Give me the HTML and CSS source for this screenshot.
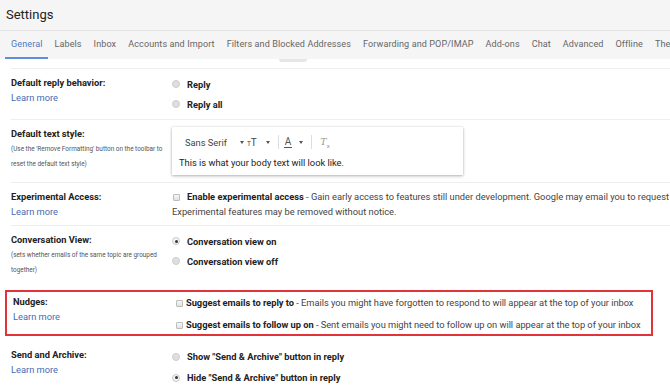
FILE: index.html
```html
<!DOCTYPE html>
<html>
<head>
<meta charset="utf-8">
<link rel="stylesheet" href="styles.css">
</head>
<body>
<header class="header"><h1 class="title">Settings</h1></header>
<nav class="tabs">
  <span class="tab active">General</span>
  <span class="tab">Labels</span>
  <span class="tab">Inbox</span>
  <span class="tab">Accounts and Import</span>
  <span class="tab">Filters and Blocked Addresses</span>
  <span class="tab">Forwarding and POP/IMAP</span>
  <span class="tab">Add-ons</span>
  <span class="tab">Chat</span>
  <span class="tab">Advanced</span>
  <span class="tab">Offline</span>
  <span class="tab">Themes</span>
</nav>
<div class="notchbar"><span class="notch"></span></div>
<main class="rows">
  <section class="row row-reply">
    <div class="label">
      <div class="label-title">Default reply behavior:</div>
      <a class="learn">Learn more</a>
    </div>
    <div class="controls radios">
      <div class="option"><span class="radio"></span><b>Reply</b></div>
      <div class="option"><span class="radio"></span><b>Reply all</b></div>
    </div>
  </section>

  <section class="row row-text">
    <div class="label">
      <div class="label-title">Default text style:</div>
      <div class="note">(Use the 'Remove Formatting' button on the toolbar to<br>reset the default text style)</div>
    </div>
    <div class="controls">
      <div class="editor">
        <div class="toolbar">
          <span class="font-name">Sans Serif</span>
          <span class="caret c1"></span>
          <span class="size-icon"><span class="t-small">T</span><span class="t-big">T</span></span>
          <span class="caret c2"></span>
          <span class="divider d1"></span>
          <span class="color-icon">A</span>
          <span class="caret c3"></span>
          <span class="divider d2"></span>
          <span class="clear-icon">T<sub>x</sub></span>
        </div>
        <div class="sample">This is what your body text will look like.</div>
      </div>
    </div>
  </section>

  <section class="row row-exp">
    <div class="label">
      <div class="label-title">Experimental Access:</div>
      <a class="learn">Learn more</a>
    </div>
    <div class="controls">
      <div class="para"><span class="checkbox"></span><b>Enable experimental access</b> - Gain early access to features still under development. Google may email you to request<br>Experimental features may be removed without notice.</div>
    </div>
  </section>

  <section class="row row-conv">
    <div class="label">
      <div class="label-title">Conversation View:</div>
      <div class="note">(sets whether emails of the same topic are grouped<br>together)</div>
    </div>
    <div class="controls radios">
      <div class="option"><span class="radio checked"></span><b>Conversation view on</b></div>
      <div class="option"><span class="radio"></span><b>Conversation view off</b></div>
    </div>
  </section>

  <section class="row row-nudges">
    <div class="label">
      <div class="label-title">Nudges:</div>
      <a class="learn">Learn more</a>
    </div>
    <div class="controls checks">
      <div class="check-option"><span class="checkbox"></span><b>Suggest emails to reply to</b> - Emails you might have forgotten to respond to will appear at the top of your inbox</div>
      <div class="check-option"><span class="checkbox"></span><b>Suggest emails to follow up on</b> - Sent emails you might need to follow up on will appear at the top of your inbox</div>
    </div>
  </section>

  <section class="row row-archive">
    <div class="label">
      <div class="label-title">Send and Archive:</div>
      <a class="learn">Learn more</a>
    </div>
    <div class="controls radios">
      <div class="option"><span class="radio"></span><b>Show "Send &amp; Archive" button in reply</b></div>
      <div class="option"><span class="radio checked"></span><b>Hide "Send &amp; Archive" button in reply</b></div>
    </div>
  </section>
</main>
</body>
</html>
```

FILE: styles.css
```css
* { box-sizing: border-box; }
html, body { margin: 0; padding: 0; }
body {
  width: 670px;
  height: 391px;
  overflow: hidden;
  background: #fff;
  font-family: Roboto, "Noto Sans", Arial, sans-serif;
  color: #222;
}
.header {
  height: 31px;
  background: #f5f5f5;
  border-bottom: 1px solid #e4e4e4;
}
.title {
  margin: 0;
  padding-left: 6px;
  font-size: 13px;
  font-weight: 400;
  line-height: 30px;
  color: #222;
}
.tabs {
  display: flex;
  height: 28px;
  padding-left: 5px;
  background: #f5f5f5;
  white-space: nowrap;
  overflow: hidden;
}
.tab {
  padding: 0 6px;
  font-size: 9.05px;
  letter-spacing: 0.1px;
  line-height: 27px;
  color: #666;
  border-bottom: 2px solid transparent;
}
.tab.active {
  color: #4a7bc6;
  border-bottom-color: #5f8fd8;
}
.notchbar {
  height: 9px;
  position: relative;
}
.notch {
  position: absolute;
  left: 279px;
  top: 0;
  width: 28px;
  height: 3px;
  background: #e6e6e6;
  border-radius: 0 0 3px 3px;
}
.rows {
  margin-left: 11px;
}
.row {
  display: flex;
  border-top: 1px solid #eeeeee;
  padding: 6px 0 6px;
  font-size: 9.3px;
}
.label {
  width: 161px;
  flex: none;
}
.label-title {
  font-weight: 700;
  line-height: 15px;
  color: #222;
}
.learn {
  display: block;
  line-height: 15px;
  color: #3f6cb5;
}
.note {
  font-size: 6.4px;
  line-height: 14.5px;
  color: #555;
  margin-top: 1px;
}
.controls {
  flex: 1;
  color: #444;
}
.controls b { color: #222; font-weight: 700; }
.radios { margin-top: -1px; }
.option {
  display: flex;
  align-items: center;
  height: 20px;
}
.radio {
  width: 8px;
  height: 8px;
  border-radius: 50%;
  background: #dedede;
  border: 1px solid #cdcdcd;
  margin-right: 7px;
  flex: none;
  display: flex;
  align-items: center;
  justify-content: center;
}
.radio.checked {
  background: #f3f3f3;
  border-color: #c9c9c9;
}
.radio.checked::after {
  content: "";
  width: 3px;
  height: 3px;
  border-radius: 50%;
  background: #333;
}
.checkbox {
  display: inline-block;
  width: 7px;
  height: 7px;
  border: 1px solid #bdbdbd;
  border-radius: 1px;
  background: linear-gradient(#f7f7f7, #e2e2e2);
  margin-right: 8px;
  vertical-align: -0.5px;
}
.row-reply { padding-bottom: 5px; }
.row-text { padding-bottom: 5px; }
.editor {
  margin-top: 1px;
  margin-bottom: 2px;
  width: 291px;
  height: 48px;
  padding: 4px 7px 0;
  background: #fff;
  box-shadow: 0 1px 3px rgba(0,0,0,0.3), 0 0 1px rgba(0,0,0,0.12);
}
.toolbar {
  display: flex;
  align-items: center;
  height: 22px;
  color: #444;
}
.font-name { margin-left: 6px; }
.caret {
  width: 0;
  height: 0;
  border-left: 2.5px solid transparent;
  border-right: 2.5px solid transparent;
  border-top: 3px solid #555;
}
.c1 { margin-left: 13px; }
.c2 { margin-left: 9px; }
.c3 { margin-left: 7px; }
.size-icon { margin-left: 3px; display: flex; align-items: baseline; color: #444; }
.t-small { font-size: 6.5px; }
.t-big { font-size: 10px; }
.divider {
  width: 1px;
  height: 14px;
  background: #ddd;
  margin-left: 8px;
}
.color-icon {
  margin-left: 5px;
  font-size: 10px;
  line-height: 10px;
  color: #555;
  border-bottom: 1px solid #555;
  padding: 0 1px;
}
.clear-icon {
  margin-left: 8px;
  font-family: "DejaVu Serif", serif;
  font-style: italic;
  font-size: 9.5px;
  color: #999;
}
.clear-icon sub { font-size: 6px; font-style: normal; font-family: Roboto, sans-serif; }
.sample {
  margin-top: 2px;
  line-height: 15px;
  color: #222;
}
.row-exp .para { line-height: 15px; white-space: nowrap; }
.row-exp .checkbox { margin-left: 1px; margin-right: 7px; }
.row-conv { padding-bottom: 8px; }
.row-nudges {
  margin-top: 5px;
  margin-left: -6px;
  margin-right: 17px;
  height: 46px;
  border: 2px solid #e2323a;
  padding: 2px 0 0 6px;
}
.checks { margin-top: -2px; }
.check-option {
  height: 22px;
  line-height: 22px;
  white-space: nowrap;
  padding-left: 2px;
  letter-spacing: -0.03px;
}
.check-option .checkbox { margin-right: 3px; }
.row-archive {
  border-top: none;
  margin-top: 4px;
  padding: 7px 0 4px;
  border-bottom: 1px solid #eeeeee;
}
.row-archive .option { height: 21px; }
```
